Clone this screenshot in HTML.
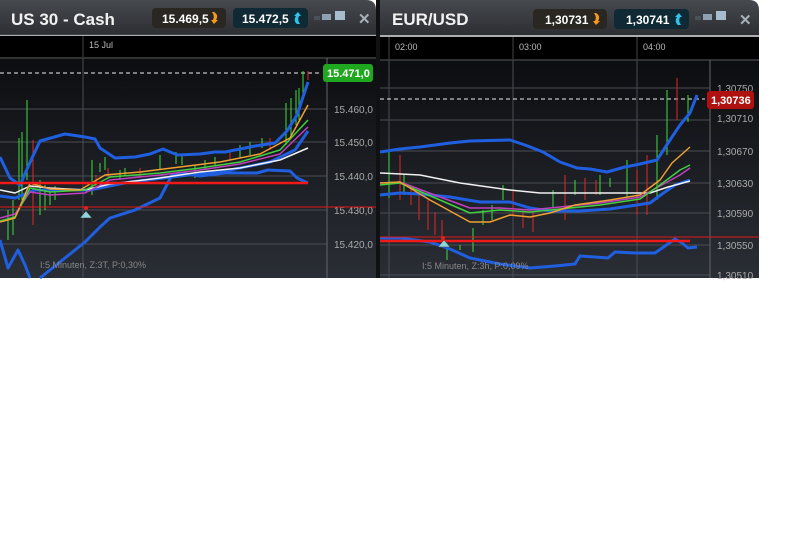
<!DOCTYPE html>
<html><head><meta charset="utf-8"><style>
html,body{margin:0;padding:0;background:#fff;width:800px;height:550px;overflow:hidden}
svg{display:block}
text{font-family:"Liberation Sans",sans-serif}
</style></head><body>
<svg width="800" height="550" viewBox="0 0 800 550" xmlns="http://www.w3.org/2000/svg">
<defs>
<linearGradient id="hd" x1="0" y1="0" x2="0" y2="1"><stop offset="0" stop-color="#46494e"/><stop offset="1" stop-color="#2c2e32"/></linearGradient>
<linearGradient id="ch" x1="0" y1="0" x2="0" y2="1"><stop offset="0" stop-color="#0c0d10"/><stop offset="1" stop-color="#2a2e35"/></linearGradient>
</defs>
<rect x="0" y="0" width="800" height="550" fill="#fff"/>
<rect x="376" y="0" width="4" height="278" fill="#101113"/>
<!-- LEFT PANE -->
<path d="M0 0 H366 Q376 0 376 10 V35 H0 Z" fill="url(#hd)"/>
<line x1="0" y1="35" x2="376" y2="35" stroke="#5a5d62"/>
<text x="11" y="25" font-size="17" font-weight="bold" fill="#f2f2f2">US 30 - Cash</text>
<rect x="152" y="8" width="74" height="20" rx="4" fill="#2a2723"/>
<text x="162" y="23" font-size="12" font-weight="bold" fill="#fff">15.469,5</text>
<path d="M214 12 q5 3 2 8 l2 0 -4 4 -3 -4 2 0 q2 -4 -1 -8z" fill="#f59a1a"/>
<rect x="233" y="8" width="75" height="20" rx="4" fill="#0f2a35"/>
<text x="242" y="23" font-size="12" font-weight="bold" fill="#fff">15.472,5</text>
<path d="M297 24 q-4 -3 -1 -8 l-2 0 4 -4 3 4 -2 0 q-2 4 1 8z" fill="#2ec4ea"/>
<rect x="314" y="16" width="6" height="4" fill="#4a5058"/><rect x="322" y="14" width="9" height="6" fill="#8fa0b0"/><rect x="335" y="11" width="10" height="9" fill="#a7bccc"/>
<text x="358" y="24" font-size="15" fill="#a8b0b8" font-weight="bold">✕</text>
<rect x="0" y="36" width="376" height="21" fill="#000"/>
<line x1="83" y1="36" x2="83" y2="57" stroke="#444"/>
<text x="89" y="48" font-size="9" fill="#bbb">15 Jul</text>
<rect x="0" y="57" width="376" height="221" fill="url(#ch)"/>
<line x1="0" y1="58" x2="376" y2="58" stroke="#555"/>
<g stroke="#4a4d53" stroke-width="1">
<line x1="83" y1="58" x2="83" y2="278"/>
<line x1="0" y1="109" x2="327" y2="109"/><line x1="0" y1="142" x2="327" y2="142"/><line x1="0" y1="176" x2="327" y2="176"/><line x1="0" y1="210" x2="327" y2="210"/><line x1="0" y1="244" x2="327" y2="244"/>
</g>
<line x1="327" y1="58" x2="327" y2="278" stroke="#666"/>
<g font-size="10" fill="#aaa"><text x="334" y="113">15.460,0</text><text x="334" y="146">15.450,0</text><text x="334" y="180">15.440,0</text><text x="334" y="214">15.430,0</text><text x="334" y="248">15.420,0</text></g>
<line x1="0" y1="73" x2="322" y2="73" stroke="#eee" stroke-dasharray="4,3"/>
<rect x="323" y="64" width="50" height="18" rx="3" fill="#1fa81f"/>
<text x="327" y="77" font-size="11" font-weight="bold" fill="#fff">15.471,0</text>
<g stroke="#3dde3d" stroke-width="1">
<line x1="19" y1="138" x2="19" y2="200"/><line x1="22" y1="132" x2="22" y2="200"/><line x1="27" y1="100" x2="27" y2="180"/><line x1="8" y1="210" x2="8" y2="240"/><line x1="13" y1="200" x2="13" y2="235"/>
<line x1="40" y1="180" x2="40" y2="215"/><line x1="45" y1="185" x2="45" y2="210"/><line x1="50" y1="188" x2="50" y2="205"/><line x1="55" y1="186" x2="55" y2="200"/>
<line x1="92" y1="160" x2="92" y2="195"/><line x1="100" y1="163" x2="100" y2="172"/><line x1="105" y1="157" x2="105" y2="170"/><line x1="120" y1="170" x2="120" y2="180"/><line x1="125" y1="168" x2="125" y2="176"/><line x1="160" y1="155" x2="160" y2="170"/><line x1="176" y1="152" x2="176" y2="164"/><line x1="182" y1="156" x2="182" y2="165"/>
<line x1="195" y1="165" x2="195" y2="178"/><line x1="205" y1="160" x2="205" y2="170"/><line x1="215" y1="157" x2="215" y2="166"/><line x1="240" y1="145" x2="240" y2="158"/><line x1="250" y1="142" x2="250" y2="155"/><line x1="262" y1="138" x2="262" y2="148"/>
<line x1="286" y1="103" x2="286" y2="145"/><line x1="291" y1="98" x2="291" y2="135"/><line x1="296" y1="90" x2="296" y2="125"/><line x1="299" y1="88" x2="299" y2="120"/><line x1="303" y1="71" x2="303" y2="98"/>
</g>
<g stroke="#e02828" stroke-width="1">
<line x1="33" y1="140" x2="33" y2="225"/><line x1="96" y1="175" x2="96" y2="190"/><line x1="108" y1="168" x2="108" y2="177"/><line x1="140" y1="168" x2="140" y2="178"/><line x1="230" y1="150" x2="230" y2="160"/><line x1="270" y1="138" x2="270" y2="150"/><line x1="308" y1="71" x2="308" y2="80"/>
</g>
<g fill="none" stroke-linejoin="round">
<polyline stroke="#1f5fe0" stroke-width="3" points="0,157 10,178 20,185 32,158 40,141 65,134 85,137 95,139 100,148 115,158 135,157 150,154 163,149 170,152 178,155 200,154 215,152 225,152 245,148 255,146 275,143 287,131 297,115 308,82"/>
<polyline stroke="#1f5fe0" stroke-width="3" points="0,240 8,268 18,250 25,265 30,278 M40,278"/>
<polyline stroke="#1f5fe0" stroke-width="3" points="40,278 60,262 85,242 100,227 110,218 135,210 160,198 172,175 180,173 200,176 225,173 257,173 268,170 290,171 297,178 308,183"/>
<polyline stroke="#1f5fe0" stroke-width="3" points="0,196 15,198 35,190 90,190 130,182 180,176 230,170 270,162 295,150 308,131"/>
<polyline stroke="#f0f0f0" stroke-width="1.5" points="0,190 15,193 30,186 50,188 85,190 110,184 160,178 200,172 240,168 280,160 308,148"/>
<polyline stroke="#c040c0" stroke-width="1.5" points="0,218 15,214 30,192 50,195 85,193 110,180 160,175 200,170 240,164 280,154 308,127"/>
<polyline stroke="#40d040" stroke-width="1.5" points="0,221 15,217 30,188 50,192 85,190 110,177 160,173 200,168 240,162 280,150 308,120"/>
<polyline stroke="#f0a030" stroke-width="1.5" points="0,222 15,218 30,183 50,189 80,190 105,175 140,172 180,167 220,162 260,154 290,138 308,105"/>
</g>
<line x1="0" y1="183" x2="308" y2="183" stroke="#f01818" stroke-width="2.5"/>
<line x1="0" y1="207" x2="376" y2="207" stroke="#e01818" stroke-width="1"/>
<path d="M80 218 l6 -7 6 7z" fill="#8fd6dc" stroke="#333" stroke-width="0.5"/>
<circle cx="86" cy="208" r="2" fill="#e02020"/>
<text x="40" y="268" font-size="9" fill="#888">I:5 Minuten, Z:3T, P:0,30%</text>

<!-- RIGHT PANE -->
<path d="M380 0 H749 Q759 0 759 10 V35 H380 Z" fill="url(#hd)"/>
<line x1="380" y1="36" x2="759" y2="36" stroke="#5a5d62"/>
<text x="392" y="25" font-size="17" font-weight="bold" fill="#f2f2f2">EUR/USD</text>
<rect x="533" y="9" width="74" height="20" rx="4" fill="#2a2723"/>
<text x="545" y="24" font-size="12" font-weight="bold" fill="#fff">1,30731</text>
<path d="M596 13 q5 3 2 8 l2 0 -4 4 -3 -4 2 0 q2 -4 -1 -8z" fill="#f59a1a"/>
<rect x="614" y="9" width="75" height="20" rx="4" fill="#0f2a35"/>
<text x="626" y="24" font-size="12" font-weight="bold" fill="#fff">1,30741</text>
<path d="M678 25 q-4 -3 -1 -8 l-2 0 4 -4 3 4 -2 0 q-2 4 1 8z" fill="#2ec4ea"/>
<rect x="695" y="16" width="6" height="4" fill="#4a5058"/><rect x="703" y="14" width="9" height="6" fill="#8fa0b0"/><rect x="716" y="11" width="10" height="9" fill="#a7bccc"/>
<text x="739" y="25" font-size="15" fill="#a8b0b8" font-weight="bold">✕</text>
<rect x="380" y="37" width="379" height="22" fill="#000"/>
<g stroke="#444"><line x1="389" y1="37" x2="389" y2="59"/><line x1="513" y1="37" x2="513" y2="59"/><line x1="637" y1="37" x2="637" y2="59"/></g>
<g font-size="9" fill="#bbb"><text x="395" y="50">02:00</text><text x="519" y="50">03:00</text><text x="643" y="50">04:00</text></g>
<rect x="380" y="59" width="379" height="219" fill="url(#ch)"/>
<line x1="380" y1="60" x2="759" y2="60" stroke="#555"/>
<g stroke="#4a4d53"><line x1="389" y1="60" x2="389" y2="278"/><line x1="513" y1="60" x2="513" y2="278"/><line x1="637" y1="60" x2="637" y2="278"/>
<line x1="380" y1="88" x2="710" y2="88"/><line x1="380" y1="120" x2="710" y2="120"/><line x1="380" y1="151" x2="710" y2="151"/><line x1="380" y1="183" x2="710" y2="183"/><line x1="380" y1="213" x2="710" y2="213"/><line x1="380" y1="245" x2="710" y2="245"/><line x1="380" y1="275" x2="710" y2="275"/></g>
<line x1="710" y1="60" x2="710" y2="278" stroke="#666"/>
<g font-size="10" fill="#aaa"><text x="717" y="92">1,30750</text><text x="717" y="122">1,30710</text><text x="717" y="155">1,30670</text><text x="717" y="187">1,30630</text><text x="717" y="217">1,30590</text><text x="717" y="249">1,30550</text><text x="717" y="279">1,30510</text></g>
<line x1="380" y1="99" x2="705" y2="99" stroke="#eee" stroke-dasharray="4,3"/>
<rect x="707" y="91" width="47" height="18" rx="3" fill="#b01010"/>
<text x="711" y="104" font-size="11" font-weight="bold" fill="#fff">1,30736</text>
<g stroke="#3dde3d" stroke-width="1">
<line x1="389" y1="152" x2="389" y2="198"/><line x1="404" y1="175" x2="404" y2="195"/><line x1="447" y1="243" x2="447" y2="260"/><line x1="460" y1="245" x2="460" y2="250"/><line x1="473" y1="228" x2="473" y2="252"/><line x1="483" y1="210" x2="483" y2="225"/><line x1="492" y1="205" x2="492" y2="220"/><line x1="503" y1="185" x2="503" y2="200"/><line x1="553" y1="190" x2="553" y2="208"/><line x1="575" y1="180" x2="575" y2="195"/><line x1="600" y1="175" x2="600" y2="195"/><line x1="610" y1="178" x2="610" y2="187"/><line x1="627" y1="160" x2="627" y2="200"/><line x1="657" y1="135" x2="657" y2="200"/><line x1="667" y1="90" x2="667" y2="155"/><line x1="688" y1="95" x2="688" y2="122"/>
</g>
<g stroke="#e02828" stroke-width="1">
<line x1="400" y1="155" x2="400" y2="200"/><line x1="411" y1="185" x2="411" y2="205"/><line x1="419" y1="190" x2="419" y2="220"/><line x1="428" y1="200" x2="428" y2="230"/><line x1="435" y1="212" x2="435" y2="235"/><line x1="442" y1="220" x2="442" y2="245"/><line x1="513" y1="190" x2="513" y2="215"/><line x1="523" y1="210" x2="523" y2="228"/><line x1="533" y1="212" x2="533" y2="232"/><line x1="565" y1="175" x2="565" y2="220"/><line x1="585" y1="178" x2="585" y2="200"/><line x1="596" y1="180" x2="596" y2="195"/><line x1="637" y1="170" x2="637" y2="215"/><line x1="647" y1="155" x2="647" y2="215"/><line x1="677" y1="78" x2="677" y2="120"/>
</g>
<g fill="none" stroke-linejoin="round">
<polyline stroke="#1f5fe0" stroke-width="3" points="380,152 400,149 420,147 450,143 470,141 510,140 525,145 543,152 560,162 577,168 590,169 607,172 625,167 640,164 657,160 670,140 680,125 690,113 697,95"/>
<polyline stroke="#1f5fe0" stroke-width="3" points="380,195 400,193 420,194 450,197 480,202 510,202 530,208 550,211 580,211 610,209 630,206 650,203 662,194 675,185 690,180"/>
<polyline stroke="#1f5fe0" stroke-width="3" points="380,238 400,238 430,242 450,249 470,258 500,264 530,268 555,266 575,264 580,256 595,257 608,258 615,252 635,253 655,253 665,246 675,239 682,243 688,248 697,247"/>
<polyline stroke="#f0f0f0" stroke-width="1.5" points="380,173 420,175 460,183 510,190 540,193 580,193 620,193 650,193 668,187 690,181"/>
<polyline stroke="#c040c0" stroke-width="1.5" points="380,183 400,182 440,197 470,208 500,208 530,210 560,207 600,203 640,197 660,186 680,175 690,168"/>
<polyline stroke="#40d040" stroke-width="1.5" points="380,185 400,183 440,200 470,213 500,210 530,212 560,209 600,205 640,199 660,185 680,170 690,165"/>
<polyline stroke="#f0a030" stroke-width="1.5" points="380,183 400,182 430,200 470,222 490,222 510,215 530,217 550,213 575,205 610,200 640,195 660,180 672,163 690,147"/>
</g>
<line x1="380" y1="241" x2="690" y2="241" stroke="#f01818" stroke-width="2.5"/>
<line x1="380" y1="237" x2="759" y2="237" stroke="#e01818" stroke-width="1"/>
<path d="M438 247 l6 -7 6 7z" fill="#8fd6dc" stroke="#333" stroke-width="0.5"/>
<circle cx="443" cy="238" r="2" fill="#e02020"/>
<text x="422" y="269" font-size="9" fill="#888">I:5 Minuten, Z:3h, P:0,09%</text>
</svg>
</body></html>
